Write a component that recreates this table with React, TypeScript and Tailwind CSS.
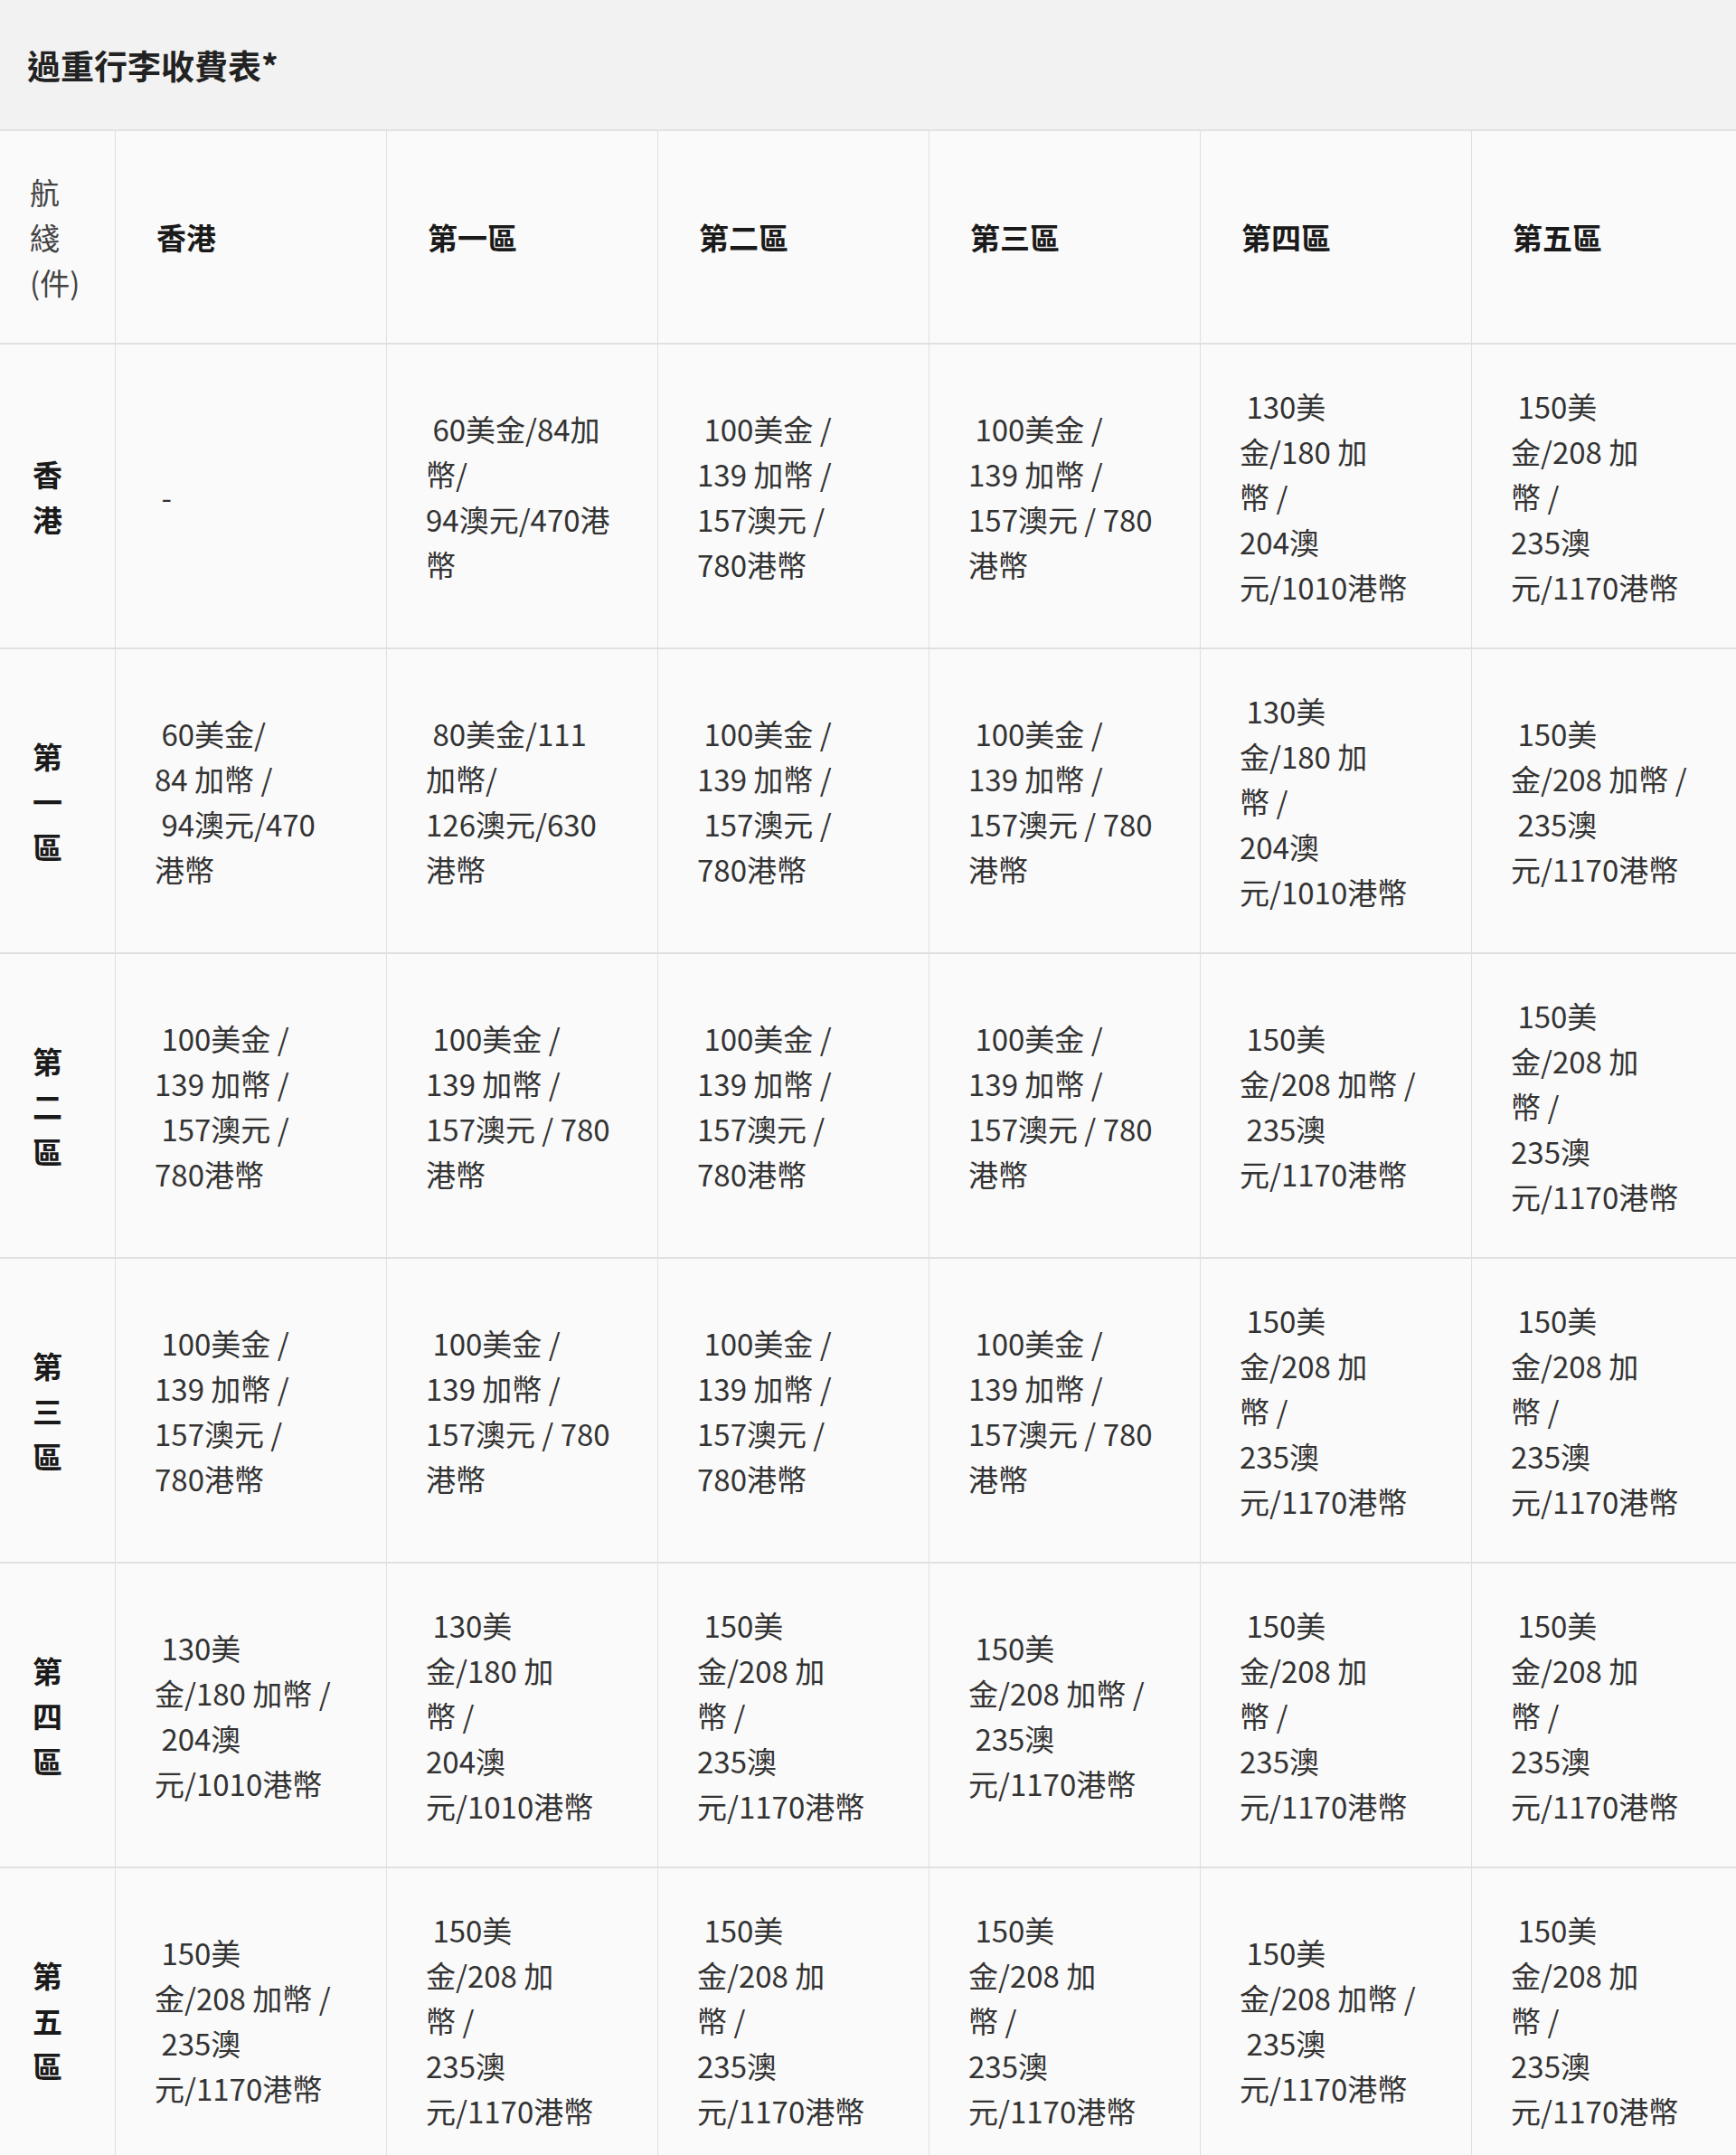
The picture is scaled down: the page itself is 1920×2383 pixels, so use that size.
const A = [" 100美金 /", "139 加幣 /", "157澳元 /", "780港幣"];
const B = [" 100美金 /", "139 加幣 /", "157澳元 / 780", "港幣"];
const A2 = [" 100美金 /", "139 加幣 /", " 157澳元 /", "780港幣"];
const C130 = [" 130美", "金/180 加", "幣 /", "204澳", "元/1010港幣"];
const C130w = [" 130美", "金/180 加幣 /", " 204澳", "元/1010港幣"];
const C150 = [" 150美", "金/208 加", "幣 /", "235澳", "元/1170港幣"];
const C150w = [" 150美", "金/208 加幣 /", " 235澳", "元/1170港幣"];

const heads = ["香港", "第一區", "第二區", "第三區", "第四區", "第五區"];

const rows: { label: string[]; cells: string[][] }[] = [
  {
    label: ["香", "港"],
    cells: [[" -"], [" 60美金/84加", "幣/", "94澳元/470港", "幣"], A, B, C130, C150],
  },
  {
    label: ["第", "一", "區"],
    cells: [
      [" 60美金/", "84 加幣 /", " 94澳元/470", "港幣"],
      [" 80美金/111", "加幣/", "126澳元/630", "港幣"],
      A2,
      B,
      C130,
      C150w,
    ],
  },
  { label: ["第", "二", "區"], cells: [A2, B, A, B, C150w, C150] },
  { label: ["第", "三", "區"], cells: [A, B, A, B, C150, C150] },
  { label: ["第", "四", "區"], cells: [C130w, C130, C150, C150w, C150, C150] },
  { label: ["第", "五", "區"], cells: [C150w, C150, C150, C150, C150w, C150] },
];

const Lines = ({ lines }: { lines: string[] }) => (
  <>
    {lines.map((l, i) => (
      <div key={i} className="whitespace-pre">
        {l}
      </div>
    ))}
  </>
);

export default function App() {
  return (
    <div
      className="w-[1920px] h-[2383px] overflow-hidden bg-[#fafafa] text-[33px] leading-[50px] text-[#333]"
      style={{ fontFamily: '"Noto Sans CJK TC", "Noto Sans", sans-serif' }}
    >
      <div className="h-[145px] bg-[#f2f2f2] border-b-2 border-[#e2e2e2] flex items-center px-[30px]">
        <h1 className="text-[37px] font-bold text-[#222]">過重行李收費表*</h1>
      </div>

      <div className="grid grid-cols-[128px_repeat(5,300px)_1fr]">
        {/* header row */}
        <div className="h-[236px] border-b-2 border-r border-[#e0e0e0] pl-[33px] flex flex-col justify-center text-[#444]">
          <div>航</div>
          <div>綫</div>
          <div>(件)</div>
        </div>
        {heads.map((h, i) => (
          <div
            key={h}
            className={`h-[236px] border-b-2 border-[#e0e0e0] pl-[45px] flex items-center font-bold text-[#1a1a1a] ${i < 5 ? "border-r" : ""}`}
          >
            {h}
          </div>
        ))}

        {rows.map((r) => (
          <div key={r.label.join("")} className="contents">
            <div className="h-[337px] border-b-2 border-r border-[#e0e0e0] pl-[36px] flex flex-col justify-center font-bold text-[#1a1a1a]">
              <Lines lines={r.label} />
            </div>
            {r.cells.map((c, i) => (
              <div
                key={i}
                className={`h-[337px] border-b-2 border-[#e0e0e0] pl-[43px] flex flex-col justify-center ${i < 5 ? "border-r" : ""}`}
              >
                <Lines lines={c} />
              </div>
            ))}
          </div>
        ))}
      </div>
    </div>
  );
}
